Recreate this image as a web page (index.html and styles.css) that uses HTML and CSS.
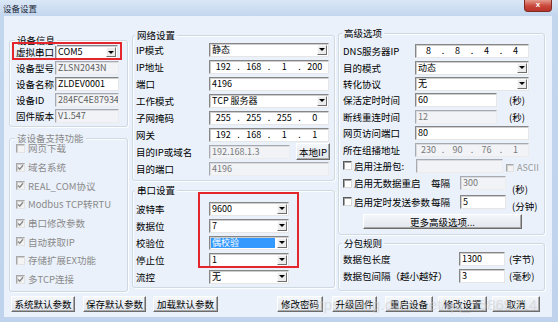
FILE: index.html
```html
<!DOCTYPE html>
<html lang="zh-CN">
<head>
    <meta charset="UTF-8">
    <meta name="viewport" content="width=device-width, initial-scale=1.0">
    <title>设备设置</title>
    <link rel="stylesheet" href="styles.css">
</head>
<body>
<div class="window">
    <div class="titlebar">
        <span class="title">设备设置</span>
        <span class="close">x</span>
    </div>

    <div class="client">
        <div class="columns">
            <!-- left column -->
            <div class="col col-left">
                <div class="group g-info">
                    <span class="group-title">设备信息</span>
                    <div class="row"><span class="lbl">虚拟串口</span><div class="field combo w63"><span class="val">COM5</span><span class="arrow"></span></div></div>
                    <div class="row"><span class="lbl">设备型号</span><div class="field ro w64">ZLSN2043N</div></div>
                    <div class="row"><span class="lbl">设备名称</span><div class="field w64">ZLDEV0001</div></div>
                    <div class="row"><span class="lbl">设备ID</span><div class="field ro w64">284FC4E87934</div></div>
                    <div class="row"><span class="lbl">固件版本</span><div class="field ro w64">V1.547</div></div>
                    <div class="mark mark-com"></div>
                </div>

                <div class="group g-func">
                    <span class="group-title">该设备支持功能</span>
                    <div class="row"><span class="ck off"></span>网页下载</div>
                    <div class="row"><span class="ck off"><svg viewBox="0 0 7 7"><path d="M1 3.5l1.8 1.8 3.2-4"/></svg></span>域名系统</div>
                    <div class="row"><span class="ck off"><svg viewBox="0 0 7 7"><path d="M1 3.5l1.8 1.8 3.2-4"/></svg></span>REAL_COM协议</div>
                    <div class="row"><span class="ck off"><svg viewBox="0 0 7 7"><path d="M1 3.5l1.8 1.8 3.2-4"/></svg></span>Modbus TCP转RTU</div>
                    <div class="row"><span class="ck off"><svg viewBox="0 0 7 7"><path d="M1 3.5l1.8 1.8 3.2-4"/></svg></span>串口修改参数</div>
                    <div class="row"><span class="ck off"><svg viewBox="0 0 7 7"><path d="M1 3.5l1.8 1.8 3.2-4"/></svg></span>自动获取IP</div>
                    <div class="row"><span class="ck off"></span>存储扩展EX功能</div>
                    <div class="row"><span class="ck off"><svg viewBox="0 0 7 7"><path d="M1 3.5l1.8 1.8 3.2-4"/></svg></span>多TCP连接</div>
                </div>
            </div>

            <!-- middle column -->
            <div class="col col-mid">
                <div class="group g-net">
                    <span class="group-title">网络设置</span>
                    <div class="row"><span class="lbl">IP模式</span><div class="field combo w120"><span class="val">静态</span><span class="arrow"></span></div></div>
                    <div class="row"><span class="lbl">IP地址</span><div class="field ip w120"><span>192</span><i>.</i><span>168</span><i>.</i><span>1</span><i>.</i><span>200</span></div></div>
                    <div class="row"><span class="lbl">端口</span><div class="field w120">4196</div></div>
                    <div class="row"><span class="lbl">工作模式</span><div class="field combo w120"><span class="val">TCP 服务器</span><span class="arrow"></span></div></div>
                    <div class="row"><span class="lbl">子网掩码</span><div class="field ip w120"><span>255</span><i>.</i><span>255</span><i>.</i><span>255</span><i>.</i><span>0</span></div></div>
                    <div class="row"><span class="lbl">网关</span><div class="field ip w120"><span>192</span><i>.</i><span>168</span><i>.</i><span>1</span><i>.</i><span>1</span></div></div>
                    <div class="row"><span class="lbl">目的IP或域名</span><div class="field off w81">192.168.1.3</div><span class="btn btn-local">本地IP</span></div>
                    <div class="row"><span class="lbl">目的端口</span><div class="field off w120">4196</div></div>
                </div>

                <div class="group g-serial">
                    <span class="group-title">串口设置</span>
                    <div class="row"><span class="lbl">波特率</span><div class="field combo w80"><span class="val">9600</span><span class="arrow"></span></div></div>
                    <div class="row"><span class="lbl">数据位</span><div class="field combo w80"><span class="val">7</span><span class="arrow"></span></div></div>
                    <div class="row"><span class="lbl">校验位</span><div class="field combo sel w80"><span class="val">偶校验</span><span class="arrow"></span></div></div>
                    <div class="row"><span class="lbl">停止位</span><div class="field combo w80"><span class="val">1</span><span class="arrow"></span></div></div>
                    <div class="row"><span class="lbl">流控</span><div class="field combo w80"><span class="val">无</span><span class="arrow"></span></div></div>
                    <div class="mark mark-serial"></div>
                </div>
            </div>

            <!-- right column -->
            <div class="col col-right">
                <div class="group g-adv">
                    <span class="group-title">高级选项</span>
                    <div class="row"><span class="lbl">DNS服务器IP</span><div class="field ip w114"><span>8</span><i>.</i><span>8</span><i>.</i><span>4</span><i>.</i><span>4</span></div></div>
                    <div class="row"><span class="lbl">目的模式</span><div class="field combo w114"><span class="val">动态</span><span class="arrow"></span></div></div>
                    <div class="row"><span class="lbl">转化协议</span><div class="field combo w114"><span class="val">无</span><span class="arrow"></span></div></div>
                    <div class="row"><span class="lbl">保活定时时间</span><div class="field w82">60</div><span class="unit u-sec">(秒)</span></div>
                    <div class="row"><span class="lbl">断线重连时间</span><div class="field off w82">12</div><span class="unit u-sec">(秒)</span></div>
                    <div class="row"><span class="lbl">网页访问端口</span><div class="field w114">80</div></div>
                    <div class="row"><span class="lbl">所在组播地址</span><div class="field ip off w114"><span>230</span><i>.</i><span>90</span><i>.</i><span>76</span><i>.</i><span>1</span></div></div>
                    <div class="row">
                        <span class="cklbl w73"><span class="ck"></span>启用注册包:</span>
                        <div class="field off w87"></div>
                        <span class="ascii"><span class="ck off small"></span>ASCII</span>
                    </div>
                    <div class="row tall">
                        <span class="cklbl w88"><span class="ck"></span>启用无数据重启</span>
                        <span class="every">每隔</span>
                        <div class="field off w46">300</div>
                        <span class="unit u-low">(秒)</span>
                    </div>
                    <div class="row tall">
                        <span class="cklbl w88"><span class="ck"></span>启用定时发送参数</span>
                        <span class="every">每隔</span>
                        <div class="field w46">5</div>
                        <span class="unit u-low2">(分钟)</span>
                    </div>
                    <span class="btn btn-more">更多高级选项...</span>
                </div>

                <div class="group g-pack">
                    <span class="group-title">分包规则</span>
                    <div class="row"><span class="lbl">数据包长度</span><div class="field w46">1300</div><span class="unit">(字节)</span></div>
                    <div class="row"><span class="lbl">数据包间隔（越小越好）</span><div class="field w46">3</div><span class="unit">(毫秒)</span></div>
                </div>
            </div>
        </div>

        <div class="actions">
            <span class="btn b1">系统默认参数</span>
            <span class="btn b2">保存默认参数</span>
            <span class="btn b3">加载默认参数</span>
            <span class="btn b4">修改密码</span>
            <span class="btn b5">升级固件</span>
            <span class="btn b6">重启设备</span>
            <span class="btn b7">修改设置</span>
            <span class="btn b8">取消</span>
        </div>
    </div>

    <span class="watermark">https://blog.csdn.net/qq_35869914</span>
</div>
</body>
</html>
```

FILE: styles.css
```css
/* General */
body {
    margin: 0;
    background: #ffffff;
    font-family: "Noto Sans CJK SC", "Liberation Sans", sans-serif;
    font-size: 9.5px;
    color: #000;
}

/* Window frame */
.window {
    position: relative;
    width: 558px;
    height: 322px;
    box-sizing: border-box;
    padding: 0 6px 5px 0;
    background: linear-gradient(to bottom, #dae7f6 0, #c2d6ee 16px, #bfd3ec 100%);
    display: flex;
    flex-direction: column;
}

.titlebar {
    height: 16px;
    flex: none;
    display: flex;
    justify-content: space-between;
    align-items: flex-start;
}

.title {
    padding: 3px 0 0 3px;
    font-size: 8.5px;
    line-height: 10px;
    color: #1e2b3a;
}

.close {
    width: 28px;
    height: 12px;
    box-sizing: border-box;
    background: linear-gradient(#e59b8e, #c9463a 55%, #b9342a);
    border: 1px solid #7e2b24;
    border-top: none;
    border-radius: 0 0 4px 4px;
    color: #fff;
    font: bold 8px "Liberation Sans", sans-serif;
    line-height: 10px;
    text-align: center;
}

.client {
    flex: 1;
    margin-left: 4px;
    background: #eaf1fa;
}

.columns {
    display: flex;
    height: 280px;
    padding-left: 5px;
}

.col-left {
    width: 119px;
    padding-top: 24px;
    margin-right: 4px;
}

.col-mid {
    width: 203px;
    padding-top: 19px;
    margin-right: 3px;
}

.col-right {
    width: 207px;
    padding-top: 17px;
}

/* Group boxes */
.group {
    position: relative;
    box-sizing: border-box;
    border: 1px solid #cfd9e2;
    border-radius: 3px;
    box-shadow: inset 1px 1px 0 #fbfdff, 1px 1px 0 #fbfdff;
}

.group-title {
    position: absolute;
    top: -7px;
    left: 3px;
    padding: 0 2px;
    background: #eaf1fa;
    line-height: 12px;
    white-space: nowrap;
}

.g-info .group-title,
.g-func .group-title {
    left: 5px;
}

.g-net .group-title,
.g-serial .group-title {
    left: 2px;
}

.g-info {
    height: 87px;
    padding: 3px 0 0 6px;
}

.g-func {
    height: 154px;
    margin-top: 11px;
    padding: 0 0 0 6px;
    color: #8a8a8a;
}

.g-net {
    height: 146px;
    padding: 5px 0 0 3px;
}

.g-serial {
    height: 98px;
    margin-top: 9px;
    padding: 9px 0 0 3px;
}

.g-adv {
    height: 202px;
    padding: 9px 0 0 4px;
}

.g-pack {
    height: 48px;
    margin-top: 8px;
    padding: 6px 0 0 4px;
}

/* Rows */
.row {
    display: flex;
    align-items: center;
    white-space: nowrap;
}

.g-info .row { height: 16px; }
.g-func .row { height: 18.7px; }
.g-net .row, .g-serial .row, .g-pack .row { height: 17px; }
.g-adv .row { height: 16.4px; }
.g-adv .row.tall { height: 18.5px; }

.lbl {
    flex: none;
    line-height: 12px;
}

.g-info .lbl { width: 39px; }
.g-net .lbl, .g-serial .lbl { width: 73px; }
.g-adv .lbl { width: 72px; }
.g-pack .lbl { width: 116px; }

/* Edit boxes */
.field {
    flex: none;
    box-sizing: border-box;
    height: 14px;
    display: flex;
    align-items: center;
    padding-left: 2px;
    background: #ffffff;
    border: 1px solid;
    border-color: #868686 #e6e6e6 #e6e6e6 #868686;
    box-shadow: inset 1px 1px 0 #cdcdcd;
    font-size: 9px;
    line-height: 12px;
    white-space: nowrap;
    overflow: hidden;
}

.field.ro,
.field.off {
    background: #f1f3f6;
    color: #7a7a7a;
    border-color: #a7abb1 #ececec #ececec #a7abb1;
    box-shadow: inset 1px 1px 0 #dadcdf;
}

.field.ro {
    color: #5e5e5e;
}

.w46 { width: 46px; }
.w63 { width: 63px; }
.w64 { width: 64px; }
.w80 { width: 80px; }
.w81 { width: 81px; }
.w82 { width: 82px; }
.w87 { width: 87px; }
.w114 { width: 114px; }
.w120 { width: 120px; }

/* Combo boxes */
.combo {
    padding-left: 1px;
}

.combo .val {
    flex: 1;
    height: 10px;
    line-height: 10px;
    padding-left: 1px;
}

.combo.sel .val {
    background: #3399ff;
    color: #ffffff;
    margin-right: 2px;
}

.arrow {
    flex: none;
    box-sizing: border-box;
    width: 10px;
    height: 10px;
    margin-right: 1px;
    display: flex;
    align-items: center;
    justify-content: center;
    background: #ececec;
    border: 1px solid;
    border-color: #fbfbfb #6f6f6f #6f6f6f #fbfbfb;
}

.arrow::before {
    content: "";
    border-left: 3px solid transparent;
    border-right: 3px solid transparent;
    border-top: 3px solid #000;
}

/* IP address boxes */
.ip {
    padding-left: 0;
}

.ip span {
    flex: 1;
    text-align: center;
}

.ip i {
    font-style: normal;
    width: 4px;
    text-align: center;
}

/* Buttons */
.btn {
    flex: none;
    box-sizing: border-box;
    height: 16px;
    display: flex;
    align-items: center;
    justify-content: center;
    background: linear-gradient(#f3f6fa, #e2e7ee);
    border: 1px solid;
    border-color: #ffffff #6c6c6c #6c6c6c #ffffff;
    box-shadow: inset -1px -1px 0 #a9a9a9;
    line-height: 12px;
    white-space: nowrap;
}

.btn-local {
    width: 34px;
    height: 17px;
    margin-left: 6px;
}

.btn-more {
    width: 159px;
    height: 15px;
    margin: 3px 0 0 20px;
}

/* Check boxes */
.ck {
    flex: none;
    box-sizing: border-box;
    width: 9px;
    height: 9px;
    margin-right: 3px;
    display: flex;
    align-items: center;
    justify-content: center;
    background: #ffffff;
    border: 1px solid;
    border-color: #5a5a5a #d8d8d8 #d8d8d8 #5a5a5a;
    box-shadow: inset 1px 1px 0 #a3a3a3;
}

.ck.off {
    background: #f3f3f3;
    border-color: #a8a8a8 #e2e2e2 #e2e2e2 #a8a8a8;
    box-shadow: inset 1px 1px 0 #cdcdcd;
}

.ck svg {
    width: 7px;
    height: 7px;
    fill: none;
    stroke: #8a8a8a;
    stroke-width: 1.4;
}

.ck.small {
    width: 8px;
    height: 8px;
}

.cklbl {
    flex: none;
    display: flex;
    align-items: center;
    line-height: 12px;
}

.cklbl .ck {
    margin-right: 2px;
}

.w73 { width: 73px; }
.w88 { width: 88px; }

.ascii {
    display: flex;
    align-items: center;
    margin: 4px 0 0 3px;
    color: #9a9a9a;
    font-size: 9px;
}

.every {
    width: 29px;
    flex: none;
    line-height: 12px;
}

.unit {
    flex: none;
    margin-left: 4px;
    line-height: 12px;
}

.u-sec { margin-left: 12px; }
.u-low { margin: 11px 0 0 6px; }
.u-low2 { margin: 8px 0 0 6px; }

/* Red highlight frames */
.mark {
    position: absolute;
    box-sizing: border-box;
    border: 2px solid #e4252b;
}

.mark-com {
    left: 2px;
    top: 1px;
    width: 110px;
    height: 18px;
}

.mark-serial {
    left: 65px;
    top: 1px;
    width: 101px;
    height: 76px;
}

/* Bottom buttons */
.actions {
    display: flex;
    padding-left: 7px;
}

.b1 { width: 64px; }
.b2 { width: 63px; margin-left: 8px; }
.b3 { width: 65px; margin-left: 7px; }
.b4 { width: 46px; margin-left: 59px; }
.b5 { width: 45px; margin-left: 9px; }
.b6 { width: 48px; margin-left: 8px; }
.b7 { width: 49px; margin-left: 5px; }
.b8 { width: 48px; margin-left: 5px; }

.watermark {
    position: absolute;
    left: 307px;
    top: 296px;
    font: 15px "Liberation Sans", sans-serif;
    color: rgba(200, 200, 200, 0.5);
    white-space: nowrap;
    pointer-events: none;
}
```
